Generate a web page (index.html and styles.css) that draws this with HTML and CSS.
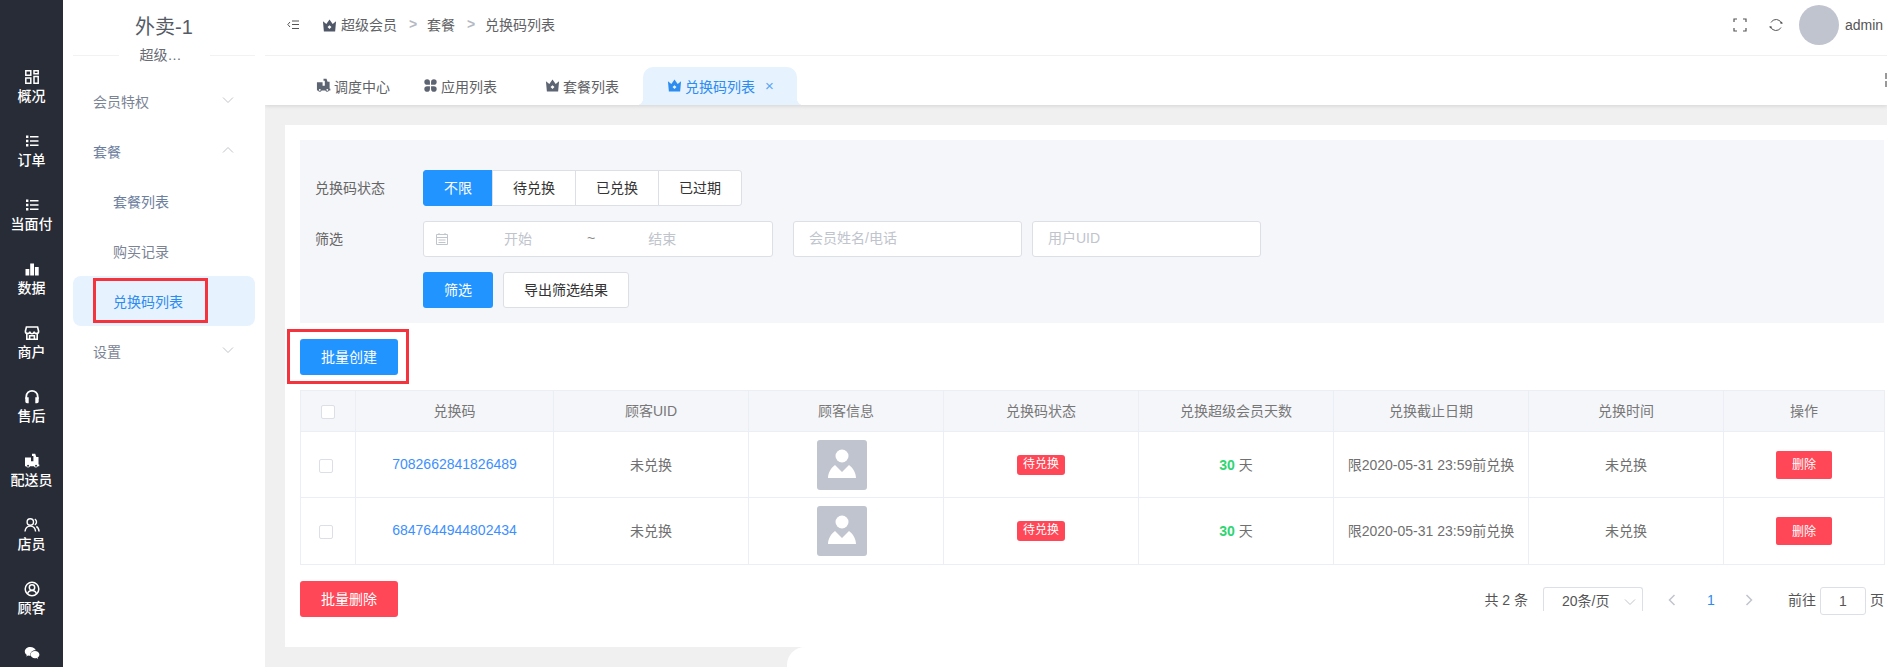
FILE: index.html
```html
<!DOCTYPE html>
<html lang="zh-CN">
<head>
<meta charset="utf-8">
<title>兑换码列表</title>
<link rel="stylesheet" href="styles.css">
</head>
<body>
<svg class="defs" aria-hidden="true">
  <symbol id="i-crown" viewBox="0 0 16 16"><path fill="currentColor" fill-rule="evenodd" d="M1 3.500 4.600 6.400 8 1.500l3.400 4.900L15 3.500 14 14.500H2ZM8 7.600 5.900 9.700 8 11.800l2.100-2.100Z"/></symbol>
  <symbol id="i-list" viewBox="0 0 16 16"><path fill="currentColor" d="M2 2.500h2.400v2.400H2zM6 3h8.500v1.500H6zM2 6.800h2.400v2.400H2zM6 7.300h8.500v1.500H6zM2 11.100h2.400v2.400H2zM6 11.600h8.500v1.500H6z"/></symbol>
  <symbol id="i-dash" viewBox="0 0 16 16"><path fill="none" stroke="currentColor" stroke-width="1.500" d="M1.800 1.800h5v4.500h-5zM10 1.800h4.200v3H10zM10 7.500h4.200v6.700H10zM1.800 9h5v5.200h-5z"/></symbol>
  <symbol id="i-bars" viewBox="0 0 16 16"><path fill="currentColor" d="M1.500 8h3.800v6.500H1.500zM6.200 2.500h3.800v12H6.200zM10.900 6h3.800v8.500h-3.800z"/></symbol>
  <symbol id="i-shop" viewBox="0 0 16 16"><path fill="none" stroke="currentColor" stroke-width="1.600" d="M2.800 7.500v6.700h10.400V7.500M2.400 2h11.200l1 4.200a2.200 2.200 0 0 1-4.400.3 2.200 2.200 0 0 1-4.400 0 2.200 2.200 0 0 1-4.400-.3ZM5.600 14v-3.300h4.800V14"/></symbol>
  <symbol id="i-headset" viewBox="0 0 16 16"><path fill="none" stroke="currentColor" stroke-width="1.800" d="M2.300 10V7.500a5.700 5.700 0 0 1 11.400 0V10"/><path fill="currentColor" d="M1.300 8.200h3.400v6H3a1.700 1.700 0 0 1-1.700-1.700zM11.300 8.200h3.400v4.300a1.700 1.700 0 0 1-1.700 1.700h-1.700z"/></symbol>
  <symbol id="i-rider" viewBox="0 0 16 16"><path fill="currentColor" fill-rule="evenodd" d="M1 4.500h6v3.700h2.400V3H8V.8h3.200L12.300 4h2.200v7.500h.8v1.700h-1.500a2 2 0 0 1-3.800 0H6a2 2 0 0 1-3.800 0H1ZM4 11.800a.9.900 0 1 0 .1 0ZM12 11.800a.9.900 0 1 0 .1 0Z"/></symbol>
  <symbol id="i-users" viewBox="0 0 16 16"><g fill="none" stroke="currentColor" stroke-width="1.400"><circle cx="6.300" cy="5" r="3.200"/><path d="M1 14.500c.3-3.400 2.300-5.400 5.300-5.400s5 2 5.300 5.400M10.800 2.200a3.200 3.200 0 0 1 0 5.700M12.300 9.500c1.700.8 2.500 2.600 2.800 5"/></g></symbol>
  <symbol id="i-person" viewBox="0 0 16 16"><g fill="none" stroke="currentColor" stroke-width="1.500"><circle cx="8" cy="8" r="6.800"/><circle cx="8" cy="6.500" r="2.700"/><path d="M3.500 13c.6-2.200 2.300-3.400 4.500-3.400s3.900 1.200 4.500 3.400"/></g></symbol>
  <symbol id="i-wechat" viewBox="0 0 16 16"><path fill="currentColor" d="M6.300 2C3.200 2 .8 4 .8 6.500c0 1.400.8 2.600 2 3.400l-.5 1.500 1.800-.9c.6.200 1.300.3 2 .3h.4a4 4 0 0 1-.2-1.200c0-2.500 2.300-4.400 5.200-4.400h.3C11.200 3.500 9 2 6.300 2Z"/><path fill="currentColor" d="M15.400 9.600c0-2-2-3.700-4.500-3.700S6.500 7.600 6.500 9.600s2 3.700 4.400 3.700c.6 0 1.100-.1 1.600-.2l1.500.8-.4-1.300c1.100-.7 1.800-1.800 1.800-3Z"/></symbol>
  <symbol id="i-apps" viewBox="0 0 16 16"><path fill="currentColor" d="M4.400 1.300a3 3 0 0 1 3 3v3h-3a3 3 0 0 1 0-6ZM11.600 1.300a3 3 0 0 1 0 6h-3v-3a3 3 0 0 1 3-3ZM4.400 8.700h3v3a3 3 0 1 1-3-3ZM8.600 8.700h3a3 3 0 1 1-3 3Z"/></symbol>
  <symbol id="i-down" viewBox="0 0 12 12"><path fill="none" stroke="currentColor" d="M1 3.500 6 8.500l5-5"/></symbol>
  <symbol id="i-up" viewBox="0 0 12 12"><path fill="none" stroke="currentColor" d="M1 8.500 6 3.500l5 5"/></symbol>
</svg>

<div class="app">
  <nav class="rail">
    <a class="rail-item"><svg class="rail-icon"><use href="#i-dash"/></svg><span>概况</span></a>
    <a class="rail-item"><svg class="rail-icon"><use href="#i-list"/></svg><span>订单</span></a>
    <a class="rail-item"><svg class="rail-icon"><use href="#i-list"/></svg><span>当面付</span></a>
    <a class="rail-item"><svg class="rail-icon"><use href="#i-bars"/></svg><span>数据</span></a>
    <a class="rail-item"><svg class="rail-icon"><use href="#i-shop"/></svg><span>商户</span></a>
    <a class="rail-item"><svg class="rail-icon"><use href="#i-headset"/></svg><span>售后</span></a>
    <a class="rail-item"><svg class="rail-icon"><use href="#i-rider"/></svg><span>配送员</span></a>
    <a class="rail-item"><svg class="rail-icon"><use href="#i-users"/></svg><span>店员</span></a>
    <a class="rail-item"><svg class="rail-icon"><use href="#i-person"/></svg><span>顾客</span></a>
    <a class="rail-item"><svg class="rail-icon"><use href="#i-wechat"/></svg></a>
  </nav>

  <aside class="side">
    <h1 class="side-title">外卖-1</h1>
    <div class="side-rule"><span class="side-sub">超级…</span></div>
    <ul class="menu">
      <li class="menu-item"><span>会员特权</span><svg class="chev"><use href="#i-down"/></svg></li>
      <li class="menu-item open"><span>套餐</span><svg class="chev"><use href="#i-up"/></svg></li>
      <li class="menu-item sub open">套餐列表</li>
      <li class="menu-item sub">购买记录</li>
      <li class="menu-item sub active">兑换码列表</li>
      <li class="menu-item"><span>设置</span><svg class="chev"><use href="#i-down"/></svg></li>
    </ul>
  </aside>

  <div class="main">
    <header class="top">
      <svg class="toggle" viewBox="0 0 12 10"><path fill="none" stroke="currentColor" d="M3 2 .8 4.500 3 7M5 1h7M5 4.500h7M5 8.500h7"/></svg>
      <div class="crumbs">
        <svg class="ico"><use href="#i-crown"/></svg><span class="crumb-first">超级会员</span>
        <span class="sep">&gt;</span><span>套餐</span>
        <span class="sep">&gt;</span><span>兑换码列表</span>
      </div>
      <div class="top-right">
        <svg class="tool" viewBox="0 0 14 14"><path fill="none" stroke="currentColor" stroke-width="1.200" d="M1 4V1h3M10 1h3v3M13 10v3h-3M4 13H1v-3"/></svg>
        <svg class="tool" viewBox="0 0 14 14"><path fill="none" stroke="currentColor" d="M2 4.500A5.700 5.700 0 0 1 12.500 5.500M12 9.500A5.700 5.700 0 0 1 1.500 8.500"/><path fill="currentColor" d="M11 5.500h3L12.500 3.500zM3 8.500H0L1.500 10.500z"/></svg>
        <div class="avatar"></div>
        <span class="user">admin</span>
      </div>
    </header>

    <div class="tabs">
      <a class="tab t1"><svg class="ico"><use href="#i-rider"/></svg>调度中心</a>
      <a class="tab t2"><svg class="ico"><use href="#i-apps"/></svg>应用列表</a>
      <a class="tab t3"><svg class="ico"><use href="#i-crown"/></svg>套餐列表</a>
      <a class="tab tab-active"><svg class="ico"><use href="#i-crown"/></svg>兑换码列表<span class="close">×</span></a>
      <svg class="tabs-more" viewBox="0 0 14 14"><path fill="currentColor" d="M0 0h6v6H0zM8 0h6v6H8zM0 8h6v6H0zM8 8h6v6H8z"/></svg>
    </div>

    <div class="content">
      <section class="card">
        <div class="filter">
          <div class="row">
            <label class="row-label">兑换码状态</label>
            <div class="seg">
              <button class="seg-btn on">不限</button>
              <button class="seg-btn">待兑换</button>
              <button class="seg-btn">已兑换</button>
              <button class="seg-btn">已过期</button>
            </div>
          </div>
          <div class="row">
            <label class="row-label">筛选</label>
            <div class="date">
              <svg class="cal" viewBox="0 0 14 14"><path fill="none" stroke="currentColor" d="M1.500 2.500h11v10h-11zM1.500 5.500h11M3.500 8h7M3.500 10.500h7M4 1v2M10 1v2"/></svg>
              <span class="d-start">开始</span><span class="d-tilde">~</span><span class="d-end">结束</span>
            </div>
            <input class="field f-name" placeholder="会员姓名/电话">
            <input class="field f-uid" placeholder="用户UID">
          </div>
          <div class="row last">
            <button class="btn primary">筛选</button>
            <button class="btn plain">导出筛选结果</button>
          </div>
        </div>

        <div class="create"><button class="btn primary wide marked">批量创建</button></div>

        <table class="grid">
          <colgroup>
            <col class="c0"><col class="c1"><col class="c2"><col class="c2"><col class="c2"><col class="c2"><col class="c2"><col class="c2"><col class="c3">
          </colgroup>
          <thead>
            <tr>
              <th><span class="check head"></span></th>
              <th class="txt">兑换码</th><th class="txt">顾客UID</th><th class="txt">顾客信息</th><th class="txt">兑换码状态</th><th class="txt">兑换超级会员天数</th><th class="txt">兑换截止日期</th><th class="txt">兑换时间</th><th class="txt">操作</th>
            </tr>
          </thead>
          <tbody>
            <tr>
              <td><span class="check"></span></td>
              <td class="txt"><a class="code">7082662841826489</a></td>
              <td class="txt">未兑换</td>
              <td><div class="face"><svg viewBox="0 0 50 50"><circle cx="25" cy="16" r="6.500" fill="#fff"/><path fill="#fff" d="M11 38c0-5 3-10 7-13l7 7 7-7c4 3 7 8 7 13z"/></svg></div></td>
              <td><span class="tag">待兑换</span></td>
              <td class="txt"><b class="days">30</b> 天</td>
              <td class="txt">限2020-05-31 23:59前兑换</td>
              <td class="txt">未兑换</td>
              <td><button class="del">删除</button></td>
            </tr>
            <tr>
              <td><span class="check"></span></td>
              <td class="txt"><a class="code">6847644944802434</a></td>
              <td class="txt">未兑换</td>
              <td><div class="face"><svg viewBox="0 0 50 50"><circle cx="25" cy="16" r="6.500" fill="#fff"/><path fill="#fff" d="M11 38c0-5 3-10 7-13l7 7 7-7c4 3 7 8 7 13z"/></svg></div></td>
              <td><span class="tag">待兑换</span></td>
              <td class="txt"><b class="days">30</b> 天</td>
              <td class="txt">限2020-05-31 23:59前兑换</td>
              <td class="txt">未兑换</td>
              <td><button class="del">删除</button></td>
            </tr>
          </tbody>
        </table>

        <div class="foot">
          <button class="btn danger wide">批量删除</button>
          <div class="pager">
            <span class="total">共 2 条</span>
            <div class="size"><span>20条/页</span><svg class="size-chev"><use href="#i-down"/></svg></div>
            <svg class="arrow prev" viewBox="0 0 8 12"><path fill="none" stroke="currentColor" stroke-width="1.500" d="M6.500 1 1.500 6l5 5"/></svg>
            <span class="num">1</span>
            <svg class="arrow next" viewBox="0 0 8 12"><path fill="none" stroke="currentColor" stroke-width="1.500" d="M1.500 1l5 5-5 5"/></svg>
            <span class="goto">前往</span>
            <div class="jump">1</div>
            <span class="page-unit">页</span>
          </div>
        </div>
      </section>
      <div class="erase"></div>
    </div>
  </div>
</div>
</body>
</html>
```

FILE: styles.css
```css
*, *::before, *::after { box-sizing: border-box; }
html, body { margin: 0; height: 100%; overflow: hidden; }
body {
  font-family: "Liberation Sans", "Noto Sans CJK SC", sans-serif;
  font-size: 14px;
  color: #606266;
  background: #fff;
}
.defs { position: absolute; width: 0; height: 0; }
button { font: inherit; cursor: pointer; }
ul { list-style: none; margin: 0; padding: 0; }

.app { display: flex; width: 1887px; height: 667px; overflow: hidden; }

/* icon rail */
.rail { flex: 0 0 63px; background: #282c37; padding-top: 61px; overflow: hidden; color: #fff; }
.rail-item { display: flex; flex-direction: column; align-items: center; height: 64px; padding-top: 8px; }
.rail-icon { width: 16px; height: 16px; margin-bottom: 1px; flex: none; }
.rail-item span { line-height: 20px; white-space: nowrap; font-weight: 500; }

/* secondary sidebar */
.side { flex: 0 0 202px; padding: 0 10px; background: #fff; }
.side-title { margin: 0; height: 55px; padding-bottom: 5px; display: flex; align-items: center; justify-content: center; font-size: 20px; font-weight: 400; color: #555b66; }
.side-rule { height: 22px; border-top: 1px solid #f1f2f4; display: flex; justify-content: center; }
.side-sub { width: 91px; height: 20px; margin-top: -11px; padding-left: 21px; background: #fff; line-height: 20px; color: #666b75; white-space: nowrap; }
.menu-item { position: relative; height: 50px; padding: 0 21px 2px 20px; display: flex; align-items: center; justify-content: space-between; color: #7b8494; }
.menu-item.open { color: #6c809e; }
.menu-item.sub { padding-left: 40px; }
.menu-item.active { margin: -1px 0 1px; padding-top: 1px; background: #e6f2fe; border-radius: 8px; color: #2d8cf0; }
.menu-item.active::after { content: ""; position: absolute; left: 20px; top: 2px; width: 115px; height: 45px; border: 3px solid #f5333c; }
.chev { width: 12px; height: 12px; margin-top: -3px; color: #c0c4cc; }

/* main column */
.main { flex: 1; min-width: 0; display: flex; flex-direction: column; background: #f0f0f0; }
.top { flex: 0 0 56px; background: #fff; border-bottom: 1px solid #f0f1f3; padding: 0 0 5px 22px; display: flex; align-items: center; }
.toggle { width: 12px; height: 10px; color: #555; }
.crumbs { margin-left: 23px; display: flex; align-items: center; padding-bottom: 2px; color: #606266; }
.ico { width: 15px; height: 15px; margin-right: 4px; flex: none; }
.crumbs .ico { color: #505868; margin-top: 3px; }
.sep { margin: 0 10px 0 12px; width: 8px; color: #b4b8c2; font-weight: 700; }
.top-right { margin-left: auto; display: flex; align-items: center; height: 40px; white-space: nowrap; }
.tool { width: 14px; height: 14px; margin-right: 22px; color: #555; }
.tool + .tool { margin-right: 16px; }
.avatar { width: 40px; height: 40px; border-radius: 50%; background: #c0c4cf; }
.user { margin-left: 6px; width: 42px; color: #555; padding-bottom: 1px; }

.tabs { flex: 0 0 49px; position: relative; background: #fff; box-shadow: 0 1px 4px rgba(0, 0, 0, .12); display: flex; align-items: flex-end; overflow: hidden; z-index: 1; clip-path: inset(0 0 -6px 0); }
.tab { display: flex; align-items: center; height: 38px; padding-bottom: 1px; color: #606266; white-space: nowrap; }
.tab .ico { color: #5d6472; margin-right: 3px; }
.t1 { margin-left: 51px; }
.t2 { margin-left: 33px; }
.t3 { margin-left: 48px; }
.tab-active { position: relative; margin-left: 24px; padding: 0 23px 1px 24px; background: #e6f2fe; border-radius: 10px 10px 0 0; color: #2d8cf0; }
.tab-active .ico { color: #2d8cf0; }
.tab-active::before, .tab-active::after { content: ""; position: absolute; bottom: 0; width: 7px; height: 7px; }
.tab-active::before { left: -7px; background: radial-gradient(circle at 0 0, transparent 7px, #e6f2fe 7.5px); }
.tab-active::after { right: -7px; background: radial-gradient(circle at 100% 0, transparent 7px, #e6f2fe 7.5px); }
.close { margin-left: 10px; font-size: 15px; color: #5aa5f5; }
.tabs-more { position: absolute; left: 1620px; top: 17px; width: 14px; height: 14px; color: #999; }

.content { flex: 1; position: relative; padding: 20px 0 20px 20px; min-height: 0; }
.card { height: 522px; background: #fff; padding: 15px 3px 0 15px; }

/* filter panel */
.filter { height: 183px; background: #f5f6fa; padding: 30px 0 0 15px; }
.row { display: flex; align-items: center; height: 36px; margin-bottom: 15px; }
.row-label { width: 108px; color: #666; padding-bottom: 2px; }
.row.last { padding-left: 108px; margin-bottom: 0; }
.seg { display: flex; }
.seg-btn { width: 84px; height: 36px; margin-left: -1px; border: 1px solid #dcdfe6; background: #fff; color: #333; padding: 0 0 2px; }
.seg-btn.on { width: 70px; margin-left: 0; background: #2294ff; border-color: #2294ff; color: #fff; border-radius: 3px 0 0 3px; }
.seg-btn:last-child { border-radius: 0 3px 3px 0; }
.date { width: 350px; height: 36px; background: #fff; border: 1px solid #dcdfe6; border-radius: 3px; display: flex; align-items: center; color: #c0c4cc; }
.date span { padding-bottom: 2px; }
.cal { width: 14px; height: 14px; margin-left: 11px; flex: none; }
.d-start { margin-left: 55px; }
.d-tilde { margin-left: 55px; color: #888; }
.d-end { margin-left: 53px; }
.field { height: 36px; border: 1px solid #dcdfe6; border-radius: 3px; background: #fff; padding: 0 15px 2px; font: inherit; color: #333; outline: none; }
.field::placeholder { color: #c0c4cc; opacity: 1; }
.f-name { width: 229px; margin-left: 20px; }
.f-uid { width: 229px; margin-left: 10px; }

.btn { height: 36px; width: 70px; border: 1px solid transparent; border-radius: 3px; padding: 0 0 2px; }
.btn.primary { background: #2294ff; color: #fff; }
.btn.plain { width: 126px; margin-left: 10px; background: #fff; border-color: #dcdfe6; color: #333; }
.btn.danger { background: #ff4757; color: #fff; }
.btn.wide { width: 98px; font-size: 14px; }
.create { margin-top: 16px; height: 36px; }
.marked { position: relative; }
.marked::after { content: ""; position: absolute; left: -14px; top: -11px; width: 122px; height: 55px; border: 3px solid #f5333c; }

/* table */
.grid { margin-top: 15px; width: 1584px; table-layout: fixed; border-collapse: collapse; color: #707070; }
.c0 { width: 55px; }
.c1 { width: 198px; }
.c2 { width: 195px; }
.c3 { width: 161px; }
.grid th, .grid td { border: 1px solid #ebeef5; text-align: center; padding: 0; }
.grid th { height: 41px; background: #f5f6fa; font-weight: 400; color: #777; }
.grid td { height: 67px; }
.grid tbody tr:first-child td { height: 66px; }
.grid .txt { padding-bottom: 2px; }
.check { display: inline-block; width: 14px; height: 14px; border: 1px solid #dcdfe6; border-radius: 2px; background: #fff; vertical-align: middle; margin: 0 4px 0 0; }
.check.head { margin: 0; }
.code { color: #3d8ffe; }
.face { width: 50px; height: 50px; margin: 0 auto; position: relative; left: -4px; background: #c0c4cf; border-radius: 3px; }
.face svg { display: block; width: 50px; height: 50px; }
.tag { display: inline-block; height: 20px; line-height: 19px; padding: 0 6px; font-size: 12px; color: #fff; background: #ff4757; border-radius: 3px; vertical-align: middle; }
.days { color: #2ed573; }
.del { width: 56px; height: 28px; border: 0; border-radius: 2px; background: #ff4757; color: #fff; font-size: 12px; padding: 0 0 2px; vertical-align: middle; }

/* footer */
.foot { margin-top: 16px; display: flex; justify-content: space-between; align-items: flex-start; }
.pager { display: flex; align-items: flex-start; margin-top: 6px; color: #555; height: 28px; line-height: 26px; }
.total { margin-right: 15px; }
.size { width: 100px; height: 24px; border: 1px solid #dcdfe6; border-bottom: 0; border-radius: 3px 3px 0 0; padding-left: 18px; position: relative; display: flex; color: #555; }
.size-chev { position: absolute; right: 6px; top: 8px; width: 12px; height: 12px; color: #c0c4cc; }
.arrow { width: 8px; height: 12px; margin-top: 7px; color: #c0c4cc; }
.prev { margin-left: 25px; }
.num { margin-left: 31px; color: #2d8cf0; width: 8px; }
.next { margin-left: 30px; }
.goto { margin-left: 35px; }
.jump { width: 46px; height: 28px; margin-left: 4px; border: 1px solid #dcdfe6; border-radius: 3px; text-align: center; background: #fff; }
.page-unit { margin-left: 4px; }

/* white patch over the bottom of the page */
.erase { position: absolute; left: 522px; right: 0; bottom: 0; height: 20px; background: #fff; border-top-left-radius: 18px; }
```
